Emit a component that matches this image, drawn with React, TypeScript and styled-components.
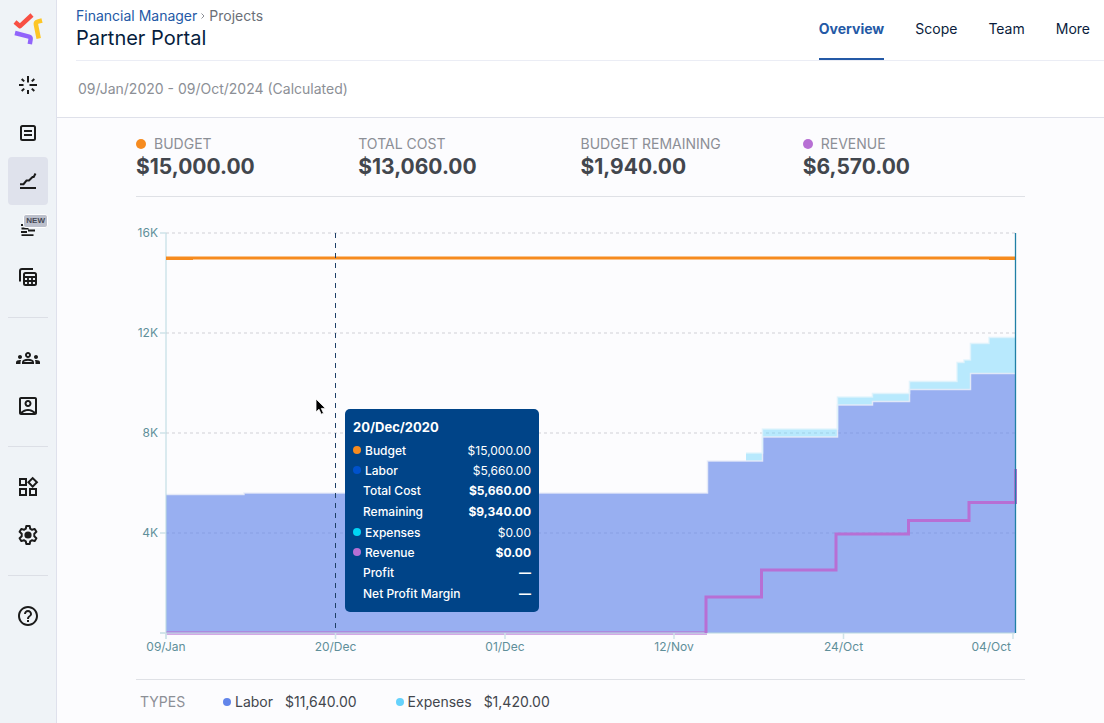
import React from "react";
import styled, { createGlobalStyle, css } from "styled-components";
import { MdHelpOutline, MdOutlineAccountBox, MdOutlineGroups, MdOutlineWidgets } from "react-icons/md";

const GlobalStyle = createGlobalStyle`
  *, *::before, *::after { box-sizing: border-box; }
  body {
    margin: 0;
    background: #fcfcfe;
    font-family: Inter, "Liberation Sans", sans-serif;
    font-size: 14px;
    color: #42464d;
  }
  dl, dd, h1, h2, p { margin: 0; }
`;

const Shell = styled.div`
  display: flex;
  min-height: 100vh;
`;

/* ---------- Sidebar ---------- */

const Sidebar = styled.nav`
  flex: none;
  width: 57px;
  padding: 0 8px;
  background: #eff3f7;
  border-right: 1px solid #dfe1ec;
  display: flex;
  flex-direction: column;
`;

const LogoLink = styled.a`
  height: 61px;
  display: flex;
  padding-top: 12px;
  justify-content: center;
`;

const NavButton = styled.button<{ $active?: boolean }>`
  position: relative;
  width: 40px;
  height: 48px;
  padding: 0;
  border: 0;
  border-radius: 4px;
  background: ${(p) => (p.$active ? "#dfe2ec" : "transparent")};
  color: #1b1b1b;
  display: flex;
  align-items: center;
  justify-content: center;
  cursor: pointer;
`;

const NavDivider = styled.hr`
  width: 40px;
  height: 1px;
  margin: 16px 0;
  border: 0;
  background: #dcdfe6;
`;

const NewBadge = styled.span`
  position: absolute;
  top: 9px;
  right: 0;
  padding: 0 2px;
  border: 1px solid #fff;
  border-radius: 3px;
  background: #bcc0cc;
  color: #454955;
  font-size: 8px;
  line-height: 12px;
  font-weight: 700;
`;

/* ---------- Header ---------- */

const Main = styled.main`
  flex: 1;
  min-width: 0;
`;

const Top = styled.div`
  background: #fff;
  border-bottom: 1px solid #dfe1ea;
`;

const Header = styled.header`
  margin-left: 19px;
  height: 61px;
  border-bottom: 1px solid #ebedf5;
  display: flex;
  justify-content: space-between;
`;

const Breadcrumb = styled.nav`
  display: flex;
  align-items: center;
  gap: 4px;
  padding-top: 8px;
  line-height: 16px;
  color: #6b6f78;
  a { color: #2459a6; text-decoration: none; }
`;

const Title = styled.h1`
  font-size: 20px;
  line-height: 28px;
  font-weight: 400;
  color: #061d3d;
`;

const Tabs = styled.nav`
  display: flex;
  gap: 31px;
  padding-right: 14px;
`;

const Tab = styled.a<{ $active?: boolean }>`
  height: 60px;
  line-height: 58px;
  color: #0a1c3c;
  text-decoration: none;
  ${(p) =>
    p.$active &&
    css`
      color: #2459a6;
      font-weight: 700;
      border-bottom: 2px solid #2459a6;
    `}
`;

const DateRange = styled.p`
  height: 56px;
  padding-left: 21px;
  line-height: 56px;
  color: #8c8f96;
`;

/* ---------- Summary ---------- */

const Content = styled.div`
  padding: 0 79px;
`;

const Summary = styled.dl`
  display: grid;
  grid-template-columns: repeat(4, 1fr);
  padding: 16px 0;
  border-bottom: 1px solid #dfe1e6;
`;

const SummaryLabel = styled.dt`
  display: flex;
  align-items: center;
  gap: 8px;
  line-height: 20px;
  color: #8c8f96;
  text-transform: uppercase;
`;

const SummaryValue = styled.dd`
  font-size: 21px;
  line-height: 26px;
  font-weight: 700;
  color: #42464d;
`;

const Dot = styled.span<{ $color: string; $size: number }>`
  flex: none;
  width: ${(p) => p.$size}px;
  height: ${(p) => p.$size}px;
  border-radius: 50%;
  background: ${(p) => p.$color};
`;

/* ---------- Chart ---------- */

const ChartBox = styled.section`
  position: relative;
  padding: 20px 0;
  border-bottom: 1px solid #dfe1e6;
`;

const ChartSvg = styled.svg`
  display: block;
  width: 100%;
  height: auto;
  overflow: visible;
  text {
    font-family: Inter, "Liberation Sans", sans-serif;
    font-size: 12px;
    font-weight: 400;
    fill: #5f8f9a;
  }
`;

const Tooltip = styled.div`
  position: absolute;
  top: 212px;
  left: 209px;
  width: 194px;
  padding: 8px;
  border-radius: 5px;
  background: #004488;
  color: #fff;
  font-size: 12px;
`;

const TooltipTitle = styled.h2`
  margin-bottom: 3px;
  font-size: 13px;
  line-height: 20px;
  font-weight: 700;
`;

const TooltipRow = styled.div<{ $dotted: boolean }>`
  display: flex;
  align-items: center;
  height: ${(p) => (p.$dotted ? 20 : 21)}px;
  padding-left: ${(p) => (p.$dotted ? 0 : 10)}px;
  dt {
    flex: 1;
    display: flex;
    align-items: center;
    gap: 4px;
    font-weight: 500;
  }
`;

const TooltipValue = styled.dd<{ $strong: boolean }>`
  font-weight: ${(p) => (p.$strong ? 700 : 400)};
`;

const Pointer = styled.svg`
  position: absolute;
  top: 201px;
  left: 179px;
`;

const Legend = styled.dl`
  display: flex;
  padding: 12px 4px;
  line-height: 20px;
`;

const LegendTitle = styled.dt`
  width: 83px;
  color: #8c8f96;
`;

const LegendItem = styled.div`
  display: flex;
  gap: 12px;
  margin-right: 39px;
  dt { display: flex; align-items: center; gap: 4px; }
`;

/* ---------- Icons ---------- */

const Icon = ({ children }: { children: React.ReactNode }) => (
  <svg width="24" height="24" viewBox="0 0 24 24" fill="none" stroke="currentColor" strokeWidth="2" aria-hidden="true">
    {children}
  </svg>
);

const Logo = () => (
  <svg width="32" height="34" viewBox="12 12 32 34" fill="none" strokeWidth="4.5" strokeLinejoin="round" aria-hidden="true">
    <path d="M15 22l5 4.200L32 15" stroke="#f84f43" />
    <path d="M42 20.500l-4.300 1.200q-2.200.6-1.800 2.800l2.800 14" stroke="#fdc626" />
    <path d="M15 33l14 3.600q2 .6 1.600 2.800l-.8 4.800" stroke="#9164fb" />
  </svg>
);

const SparkIcon = () => (
  <Icon>
    <path d="M12 3v6.500M12 17v4M3 12h4.500M13.500 12H21M5.700 6l2.500 2.400M18.300 6l-2.500 2.400M5.700 18l2.500-2.400M18.300 18l-2.500-2.400" />
  </Icon>
);

const NoteIcon = () => (
  <Icon>
    <rect x="5" y="5" width="14" height="14" rx="1.500" />
    <path d="M8 10h8M8 14h8" />
  </Icon>
);

const TrendIcon = () => (
  <Icon>
    <path d="M4 19h16M4 15.200h3.500l3-3.700h2.500l3.500-3.500h1.200L19.500 4.500" />
  </Icon>
);

const TimelineIcon = () => (
  <Icon>
    <path d="M5 8h4M5.500 11.500H12.500M12 13.500h7M5 15h6M5.500 18.200h12" strokeWidth="1.800" />
  </Icon>
);

const TablesIcon = () => (
  <Icon>
    <path d="M4 16.500V6a2 2 0 0 1 2-2h11" />
    <rect x="8" y="8" width="12" height="12" rx="1.500" />
    <path d="M8 12h12M8 16h12M12 12v8M16 12v8" strokeWidth="1.800" />
  </Icon>
);

const GearIcon = () => (
  <Icon>
    <path
      d="M10.300 3h3.400l.5 2.700 1.900 1.100 2.600-.9 1.700 2.900-2.100 1.900v2.600l2.100 1.900-1.700 2.900-2.600-.9-1.900 1.100-.5 2.700h-3.400l-.5-2.700-1.900-1.100-2.600.9-1.700-2.900 2.100-1.900v-2.600L3.600 8.800l1.700-2.900 2.600.9 1.900-1.100z"
      strokeLinejoin="round"
    />
    <circle cx="12" cy="12" r="3.600" fill="currentColor" stroke="none" />
  </Icon>
);

/* ---------- Data ---------- */

const summary = [
  { label: "Budget", value: "$15,000.00", color: "#f68b1f" },
  { label: "Total cost", value: "$13,060.00" },
  { label: "Budget remaining", value: "$1,940.00" },
  { label: "Revenue", value: "$6,570.00", color: "#b76fd4" },
];

const tooltipRows = [
  { label: "Budget", value: "$15,000.00", color: "#f68b1f" },
  { label: "Labor", value: "$5,660.00", color: "#0052cc" },
  { label: "Total Cost", value: "$5,660.00", strong: true },
  { label: "Remaining", value: "$9,340.00", strong: true },
  { label: "Expenses", value: "$0.00", color: "#00d5f5" },
  { label: "Revenue", value: "$0.00", color: "#b76fd4", strong: true },
  { label: "Profit", value: "—", strong: true },
  { label: "Net Profit Margin", value: "—", strong: true },
];

const legend = [
  { label: "Labor", value: "$11,640.00", color: "#6285ea" },
  { label: "Expenses", value: "$1,420.00", color: "#65d2fc" },
];

const yTicks = [
  { y: 16, label: "16K" },
  { y: 116, label: "12K" },
  { y: 216, label: "8K" },
  { y: 316, label: "4K" },
  { y: 416, label: "" },
];

const xTicks = [
  { x: 30, label: "09/Jan" },
  { x: 199.5, label: "20/Dec" },
  { x: 369, label: "01/Dec" },
  { x: 538, label: "12/Nov" },
  { x: 707.5, label: "24/Oct" },
  { x: 877, label: "04/Oct" },
];

const laborTop =
  "M30 277.500H108V276H571.500V244H626.500V220H701.500V188H736.500V184.500H773.500V172.500H834.500V156.500H879";
const expensesTop =
  "M610 236H626.500V212H701.500V180H736.500V176.500H773.500V164.500H821V145.500H828V143H834.500V126.500H853V120.500H879";
const laborArea = `${laborTop}V416H30Z`;
const expensesArea = `${expensesTop}V156.500H834.500V172.500H773.500V184.500H736.500V188H701.500V220H626.500V244H610Z`;
const revenueLine =
  "M570 416V380H625.500V353H700V317H772.500V303.500H833V285.500H879.500V252";

const Chart = () => (
  <ChartSvg viewBox="0 0 889 442" role="img" aria-label="Budget, labor, expenses and revenue over time">
    {yTicks.slice(0, 4).map((t) => (
      <path key={t.y} d={`M30 ${t.y}H879`} stroke="#cfd0d6" strokeWidth="1.200" strokeDasharray="3 3" />
    ))}
    <path d={laborArea} fill="#6285ea" fillOpacity="0.650" />
    <path d={expensesArea} fill="#65d2fc" fillOpacity="0.450" />
    <path d={laborTop} fill="none" stroke="#e9ecf8" strokeOpacity="0.850" strokeWidth="1.500" />
    <path d={expensesTop} fill="none" stroke="#dff3fc" strokeOpacity="0.850" strokeWidth="1.500" />
    <path d="M30 416H571" stroke="#b76fd4" strokeOpacity="0.600" strokeWidth="4" />
    <path d="M30 16V422M24 416H879" fill="none" stroke="#b9d9e0" strokeOpacity="0.700" strokeWidth="1.500" />
    {yTicks.map((t) => (
      <g key={t.y}>
        <path d={`M24 ${t.y}H30`} stroke="#cfe3e8" strokeWidth="1.500" />
        <text x="22" y={t.y + 4} textAnchor="end">{t.label}</text>
      </g>
    ))}
    {xTicks.map((t, i) => {
      const last = i === xTicks.length - 1;
      return (
        <g key={t.label}>
          <path d={`M${t.x} 416V422`} stroke="#cfe3e8" strokeWidth="1.500" />
          <text x={last ? 875 : t.x} y="434" textAnchor={last ? "end" : "middle"}>{t.label}</text>
        </g>
      );
    })}
    <path d="M30 41H879" stroke="#f68b1f" strokeWidth="3" />
    <path d="M30 42H57M853 42H879" stroke="#f68b1f" strokeWidth="2" />
    <path d="M199.500 16V416" stroke="#1d3f66" strokeDasharray="5 5" />
    <path d={revenueLine} fill="none" stroke="#b76fd4" strokeWidth="3" />
    <path d="M879.500 16V416" stroke="#2080a6" strokeWidth="1.300" />
  </ChartSvg>
);

export default function App() {
  return (
    <>
      <GlobalStyle />
      <Shell>
        <Sidebar aria-label="Main">
          <LogoLink href="#" aria-label="Home"><Logo /></LogoLink>
          <NavButton aria-label="Activity"><SparkIcon /></NavButton>
          <NavButton aria-label="Notes"><NoteIcon /></NavButton>
          <NavButton aria-label="Finance" $active><TrendIcon /></NavButton>
          <NavButton aria-label="Timeline"><TimelineIcon /><NewBadge>NEW</NewBadge></NavButton>
          <NavButton aria-label="Tables"><TablesIcon /></NavButton>
          <NavDivider />
          <NavButton aria-label="Teams"><MdOutlineGroups size={24} /></NavButton>
          <NavButton aria-label="Contacts"><MdOutlineAccountBox size={24} /></NavButton>
          <NavDivider />
          <NavButton aria-label="Apps"><MdOutlineWidgets size={24} /></NavButton>
          <NavButton aria-label="Settings"><GearIcon /></NavButton>
          <NavDivider />
          <NavButton aria-label="Help"><MdHelpOutline size={24} /></NavButton>
        </Sidebar>
        <Main>
          <Top>
            <Header>
              <div>
                <Breadcrumb aria-label="Breadcrumb">
                  <a href="#">Financial Manager</a>
                  <svg width="4" height="8" viewBox="0 0 4 8" fill="none" stroke="#8c8f96" aria-hidden="true">
                    <path d="M.5 1.500L3 4 .5 6.500" />
                  </svg>
                  <span>Projects</span>
                </Breadcrumb>
                <Title>Partner Portal</Title>
              </div>
              <Tabs aria-label="Project">
                <Tab href="#" $active>Overview</Tab>
                <Tab href="#">Scope</Tab>
                <Tab href="#">Team</Tab>
                <Tab href="#">More</Tab>
              </Tabs>
            </Header>
            <DateRange>09/Jan/2020 - 09/Oct/2024 (Calculated)</DateRange>
          </Top>
          <Content>
            <Summary>
              {summary.map((s) => (
                <div key={s.label}>
                  <SummaryLabel>
                    {s.color && <Dot $color={s.color} $size={10} />}
                    {s.label}
                  </SummaryLabel>
                  <SummaryValue>{s.value}</SummaryValue>
                </div>
              ))}
            </Summary>
            <ChartBox>
              <Chart />
              <Pointer width="12" height="20" viewBox="0 0 12 20" aria-hidden="true">
                <path d="M1 1v13l3-2.800 2.200 5 2.300-1-2.200-4.800h4.200z" fill="#000" stroke="#fff" strokeWidth=".8" />
              </Pointer>
              <Tooltip role="tooltip">
                <TooltipTitle>20/Dec/2020</TooltipTitle>
                <dl>
                  {tooltipRows.map((r) => (
                    <TooltipRow key={r.label} $dotted={!!r.color}>
                      <dt>
                        {r.color && <Dot $color={r.color} $size={8} />}
                        {r.label}
                      </dt>
                      <TooltipValue $strong={!!r.strong}>{r.value}</TooltipValue>
                    </TooltipRow>
                  ))}
                </dl>
              </Tooltip>
            </ChartBox>
            <Legend>
              <LegendTitle>TYPES</LegendTitle>
              {legend.map((l) => (
                <LegendItem key={l.label}>
                  <dt><Dot $color={l.color} $size={8} />{l.label}</dt>
                  <dd>{l.value}</dd>
                </LegendItem>
              ))}
            </Legend>
          </Content>
        </Main>
      </Shell>
    </>
  );
}
